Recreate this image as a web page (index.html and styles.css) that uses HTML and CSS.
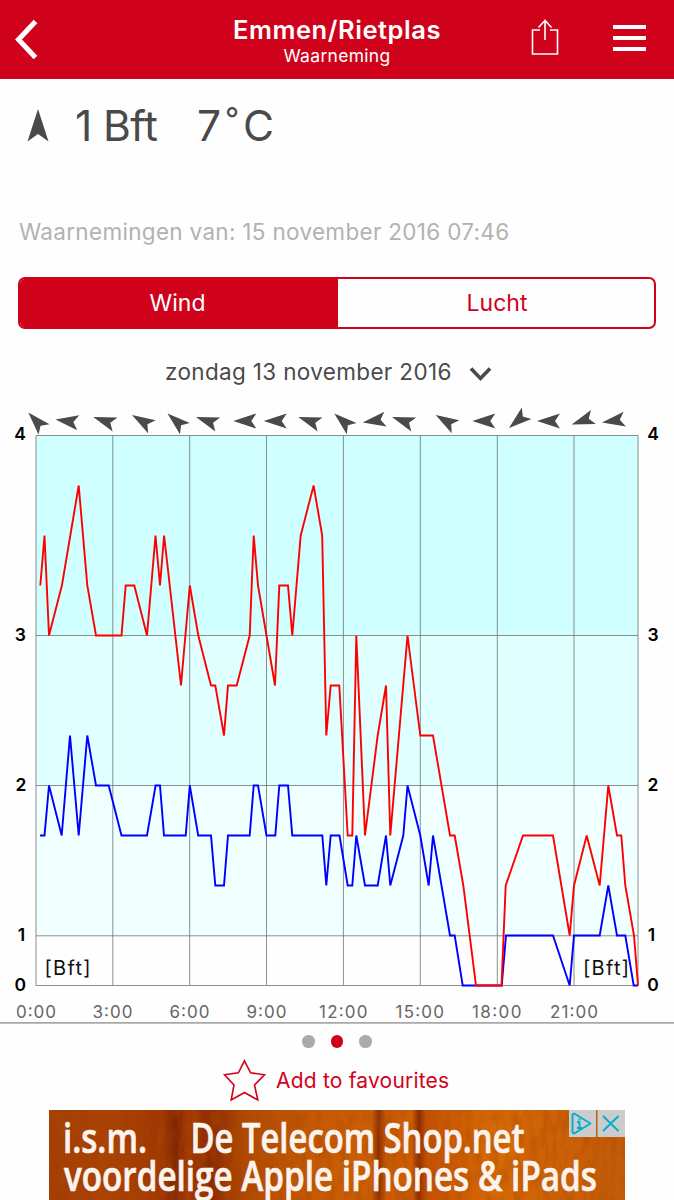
FILE: index.html
```html
<!DOCTYPE html>
<html lang="nl">
<head>
<meta charset="utf-8">
<title>Emmen/Rietplas</title>
<link rel="stylesheet" href="styles.css">
</head>
<body>
<header class="topbar">
  <svg class="icon-back" width="26" height="42" viewBox="0 0 26 42"><path d="M23.500 2.500 6.500 20.500 23.500 38.500" fill="none" stroke="#fff" stroke-width="5"/></svg>
  <div class="heading">
    <h1 class="title">Emmen/Rietplas</h1>
    <div class="subtitle">Waarneming</div>
  </div>
  <svg class="icon-share" width="30" height="38" viewBox="0 0 30 38"><path d="M10 12H2.500V36H27.500V12H20M15 3V22M8.500 9.500 15 2.500 21.500 9.500" fill="none" stroke="#fff" stroke-width="1.600"/></svg>
  <div class="icon-menu"><i></i><i></i><i></i></div>
</header>
<main>
  <section class="current">
    <svg class="north" width="22" height="33" viewBox="0 0 22 33"><path d="M11 0 21.500 32.500 11 25 .5 32.500Z" fill="#4a4a4a"/></svg>
    <span class="wind-now">1 Bft</span>
    <span class="temp-now">7<span class="degree">°</span>C</span>
  </section>
  <p class="observed">Waarnemingen van: 15 november 2016 07:46</p>
  <nav class="tabs">
    <span class="tab active">Wind</span>
    <span class="tab">Lucht</span>
  </nav>
  <div class="date"><span>zondag 13 november 2016</span>
    <svg width="24" height="18" viewBox="0 0 24 18"><path d="M3 3.500 12.500 13.500 22 3.500" fill="none" stroke="#4a4a4a" stroke-width="3.600"/></svg>
  </div>
  <svg class="chart" width="674" height="622" viewBox="0 402 674 622">
    <defs><path id="a" d="M0 0 23-7.500 18 0 23 7.500Z"/></defs>
    <g fill="#4a4a4a">
      <use href="#a" transform="translate(28.300 412.500) rotate(47)"/>
      <use href="#a" transform="translate(55.500 419.500) rotate(8)"/>
      <use href="#a" transform="translate(93.300 417) rotate(19)"/>
      <use href="#a" transform="translate(132 415) rotate(30.500)"/>
      <use href="#a" transform="translate(167.500 413.500) rotate(41)"/>
      <use href="#a" transform="translate(196 417) rotate(19)"/>
      <use href="#a" transform="translate(233.300 421)"/>
      <use href="#a" transform="translate(263.700 421)"/>
      <use href="#a" transform="translate(298.300 417) rotate(19)"/>
      <use href="#a" transform="translate(334.300 413.500) rotate(41)"/>
      <use href="#a" transform="translate(362.700 422.500) rotate(-8.500)"/>
      <use href="#a" transform="translate(392 417) rotate(19)"/>
      <use href="#a" transform="translate(435.700 415) rotate(30.500)"/>
      <use href="#a" transform="translate(472.300 421)"/>
      <use href="#a" transform="translate(509 428) rotate(-40)"/>
      <use href="#a" transform="translate(537 421)"/>
      <use href="#a" transform="translate(571.700 424.500) rotate(-19)"/>
      <use href="#a" transform="translate(602 422.500) rotate(-8.500)"/>
    </g>
    <path fill="#d0ffff" d="M36 435.500h602v200H36z"/>
    <path fill="#e0ffff" d="M36 635.500h602v150H36z"/>
    <path fill="#f0ffff" d="M36 785.500h602v150H36z"/>
    <path class="grid" d="M36 435.500H638V985.500H36ZM36 635.500H638M36 785.500H638M36 935.800H638M112.800 435V985M189.700 435V985M266.500 435V985M343.400 435V985M420.300 435V985M497.300 435V985M574 435V985"/>
    <polyline class="line mean" points="40,835.5 44.5,835.5 49,785.5 61.7,835.5 70,735.5 78.7,835.5 87.3,735.5 96,785.5 108.7,785.5 121.5,835.5 147,835.5 155.6,785.5 160,785.5 164,835.5 185.7,835.5 189.8,785.5 198.2,835.5 211,835.5 215.3,885.5 224,885.5 228,835.5 249.7,835.5 253.7,785.5 258,785.5 266.5,835.5 275.3,835.5 279.3,785.5 288,785.5 292.3,835.5 322.3,835.5 326.3,885.5 330.7,835.5 339.5,835.5 347.7,885.5 352.3,885.5 356.3,835.5 365,885.5 377.7,885.5 386,835.5 390.3,885.5 403.3,835.5 407.5,785.5 420.3,835.5 428.7,885.5 433,835.5 450,935.5 454.7,935.5 462.7,985.5 501.7,985.5 506,935.5 553,935.5 569.7,985.5 574,935.5 599.7,935.5 608.3,885.5 617,935.5 625.3,935.5 633.7,985.5 638,985.5"/>
    <polyline class="line gust" points="40.3,585.5 44.5,535.5 49,635.5 62,585 78.7,485.5 87.3,585.5 96,635.5 121.5,635.5 125.7,585.5 134.3,585.5 147,635.5 155.5,535.5 160,585.5 164.1,535.5 181,685.5 189.8,585.5 198.3,635.5 211,685.5 215.3,685.5 224,735.5 228,685.5 236.7,685.5 249.7,635.5 253.7,535.5 258,585.5 266.5,635.5 275,685.5 279.3,585.5 288,585.5 292.3,635.5 300.7,535.5 313.6,485.5 322.2,535.5 326.3,735.5 330.7,685.5 339.3,685.5 347.7,835.5 352.3,835.5 356.3,635.5 365,835.5 377.7,735.5 386,685.5 390.3,835.5 407.5,635.5 420.3,735.5 433,735.5 450,835.5 454.7,835.5 463.3,885.5 476,985.5 501.5,985.5 505.7,885.5 523,835.5 553,835.5 569.7,935.5 574,885.5 586.7,835.5 599.7,885.5 608.3,785.5 617,835.5 621.3,835.5 625.3,885.5 634,935.5 638,985.5"/>
    <g class="level">
      <text x="20" y="440">4</text><text x="20.300" y="641">3</text><text x="21" y="791">2</text><text x="21.500" y="941">1</text><text x="20.300" y="990.500">0</text>
      <text x="653" y="440">4</text><text x="653" y="641">3</text><text x="653" y="791">2</text><text x="651.500" y="941">1</text><text x="653" y="990.500">0</text>
    </g>
    <g class="unit"><text x="44.500" y="975" textLength="46">[Bft]</text><text x="583" y="975" textLength="46">[Bft]</text></g>
    <g class="hour">
      <text x="16" y="1018" textLength="40">0:00</text><text x="92.500" y="1018" textLength="40">3:00</text><text x="169.500" y="1018" textLength="40">6:00</text><text x="246.500" y="1018" textLength="40">9:00</text><text x="319" y="1018" textLength="48.500">12:00</text><text x="395.500" y="1018" textLength="48.500">15:00</text><text x="472" y="1018" textLength="49.500">18:00</text><text x="550" y="1018" textLength="48">21:00</text>
    </g>
    <path d="M0 1022.800H674" stroke="#a8a8a8" stroke-width="1.700"/>
  </svg>
  <div class="pager"><i></i><i class="on"></i><i></i></div>
  <div class="favourite">
    <svg width="44" height="44" viewBox="0 0 44 44"><path d="M22.500 2.800 28.600 14.800 42.500 16.800 32.500 27 35.800 42 22.500 34.500 9.200 42 12 27 2.500 16.800 16.400 14.800Z" fill="none" stroke="#d0021b" stroke-width="1.600"/></svg>
    <span>Add to favourites</span>
  </div>
  <svg class="ad" width="576" height="90" viewBox="0 0 576 90">
    <defs>
      <linearGradient id="wood">
        <stop offset="0" stop-color="#a23d04"/><stop offset=".1" stop-color="#aa4103"/><stop offset=".2" stop-color="#9e3603"/><stop offset=".22" stop-color="#7e2602"/><stop offset=".24" stop-color="#a43a02"/><stop offset=".28" stop-color="#8b2a02"/><stop offset=".34" stop-color="#b04902"/><stop offset=".46" stop-color="#c65a04"/><stop offset=".56" stop-color="#cd6005"/><stop offset=".572" stop-color="#8a2d02"/><stop offset=".585" stop-color="#c95a05"/><stop offset=".63" stop-color="#ce5e03"/><stop offset=".642" stop-color="#8a2a01"/><stop offset=".655" stop-color="#c45104"/><stop offset=".77" stop-color="#d66905"/><stop offset="1" stop-color="#c35a0a"/>
      </linearGradient>
      <filter id="grain" x="0" y="0" width="100%" height="100%"><feTurbulence type="fractalNoise" baseFrequency=".12 .04" numOctaves="4" seed="8"/><feColorMatrix values="0 0 0 0 .4  0 0 0 0 .07  0 0 0 0 0  1.100 0 0 0 -.42"/></filter>
    </defs>
    <rect width="576" height="90" fill="url(#wood)"/>
    <rect width="576" height="90" filter="url(#grain)"/>
    <g class="ad-copy">
      <text x="14" y="43" textLength="84" lengthAdjust="spacingAndGlyphs">i.s.m.</text>
      <text x="141.500" y="43" textLength="334" lengthAdjust="spacingAndGlyphs">De Telecom Shop.net</text>
      <text x="15" y="81" textLength="533" lengthAdjust="spacingAndGlyphs">voordelige Apple iPhones &amp; iPads</text>
    </g>
    <path fill="#cbcccc" d="M520 0h27v27h-27zM548.500 0H576v27h-27.500z"/>
    <g fill="none" stroke="#00aecd" stroke-width="1.900" stroke-linejoin="round"><path d="M523.500 5.500Q523.500 3 526 4L541.500 13.500 526 23Q523.500 24 523.500 21.500ZM554 6 569.500 21M569.500 6 554 21"/><path d="M528 12H530.500V18M528 18H533M530.500 8.500V10.500"/></g>
  </svg>
</main>
</body>
</html>
```
FILE: styles.css
```css
* { box-sizing: border-box; }
body { margin: 0; width: 674px; height: 1200px; overflow: hidden; background: #fefefe; color: #4a4a4a; font-family: Inter, "Liberation Sans", sans-serif; }
svg { display: block; flex: none; }
.topbar { height: 79px; background: #d0021b; color: #fff; display: grid; grid-template-columns: 162px 350px 1fr 33px; padding: 0 28px 0 0; }
.topbar .icon-back { margin: 19px 0 0 12px; }
.heading { text-align: center; }
.title { margin: 13px 0 0; font-size: 25.500px; line-height: 33px; font-weight: 600; letter-spacing: .55px; }
.subtitle { font-size: 17.500px; line-height: 20px; letter-spacing: .3px; }
.icon-share { margin: 18px 0 0 17.500px; }
.icon-menu { display: flex; flex-direction: column; gap: 7.300px; padding-top: 25px; }
.icon-menu i { height: 3.800px; background: #fff; }
.current { height: 137px; padding: 23px 0 0 27px; display: flex; align-items: flex-start; font-size: 42.500px; line-height: 47px; font-weight: 400; }
.north { margin-top: 6.500px; }
.wind-now { width: 122px; margin-left: 26px; letter-spacing: -.6px; }
.temp-now { display: flex; letter-spacing: -1px; }
.degree { width: 23px; text-align: center; font-size: 31px; line-height: 34px; }
.observed { margin: 0; height: 61px; padding-left: 19px; font-size: 22.500px; line-height: 32px; color: #b2b2b2; letter-spacing: .31px; }
.tabs { height: 52px; margin: 0 18px; display: grid; grid-template-columns: 318px 1fr; border: 2px solid #d0021b; border-radius: 7px; overflow: hidden; font-size: 23px; line-height: 49px; text-align: center; color: #d0021b; letter-spacing: .05px; }
.tab.active { background: #d0021b; color: #fff; padding-right: 3px; }
.tab:last-child { padding-left: 2px; }
.date { height: 73px; padding: 27px 0 0 165px; display: flex; gap: 16px; font-size: 22.500px; line-height: 32px; letter-spacing: .34px; }
.date svg { margin-top: 9px; }
.grid { fill: none; stroke: #6e7474; stroke-width: 1; stroke-opacity: .8; }
.line { fill: none; stroke-width: 1.900; }
.mean { stroke: #00f; }
.gust { stroke: #f00; }
.level { font-size: 17.500px; font-weight: 600; fill: #000; text-anchor: middle; }
.unit { font-size: 20px; fill: #111; }
.hour { font-size: 17px; fill: #666; }
.pager { height: 34px; display: flex; justify-content: center; gap: 16px; padding-top: 11px; }
.pager i { width: 12.700px; height: 12.700px; border-radius: 50%; background: #aaa; }
.pager .on { background: #d0021b; }
.favourite { height: 52px; padding-left: 222px; display: flex; gap: 10px; color: #d0021b; font-size: 21px; line-height: 46px; letter-spacing: .2px; }
.ad { margin-left: 49px; }
.ad-copy { font: 600 42px "Open Sans", "Noto Sans", sans-serif; fill: #fbf3ee; stroke: #fbf3ee; stroke-width: .7px; }
```
